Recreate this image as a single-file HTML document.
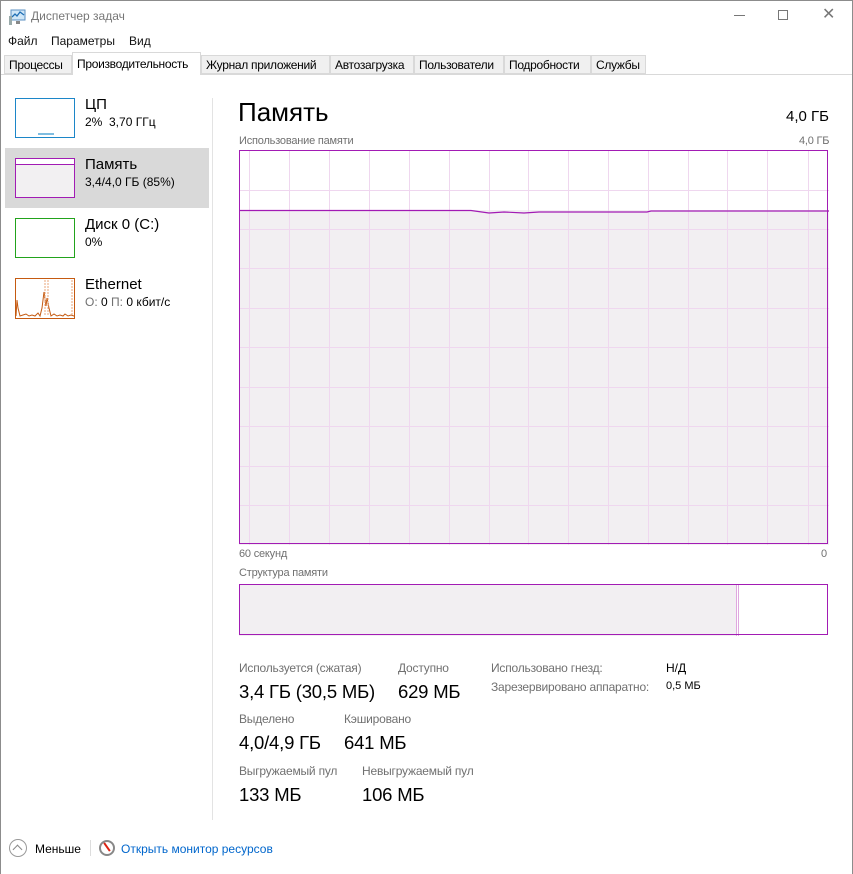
<!DOCTYPE html>
<html><head><meta charset="utf-8"><style>
*{margin:0;padding:0;box-sizing:border-box}
body{width:853px;height:874px;overflow:hidden;background:#fff;font-family:"Liberation Sans","DejaVu Sans",sans-serif;position:relative;color:#000}
.a{position:absolute;white-space:nowrap}
.lbl{font-size:12px;color:#707070;letter-spacing:-0.2px}
.big{font-size:18.5px;color:#000;letter-spacing:-0.2px}
.tab{position:absolute;top:55px;height:19px;border:1px solid #d9d9d9;background:#f0f0f0;font-size:12px;padding:2px 3px 0 4px;color:#000;letter-spacing:-0.3px;overflow:hidden}
</style></head><body>
<div class="a" style="left:0;top:0;width:853px;height:874px;border:1px solid #8c8c8c;border-bottom:none"></div>
<svg class="a" style="left:8px;top:8px" width="18" height="18" viewBox="0 0 18 18"><rect x="3" y="2" width="14" height="10" fill="#cfe6f7" stroke="#5a8fc0"/><polyline points="4,9 7,6 9,8 12,4 16,7" fill="none" stroke="#1f6fb5" stroke-width="1.3"/><rect x="1" y="8" width="3" height="9" fill="#9aa" /><rect x="8" y="13" width="4" height="3" fill="#888"/></svg>
<div class="a" style="left:31px;top:9px;font-size:12px;color:#777">Диспетчер задач</div>
<div class="a" style="left:734px;top:15px;width:11px;height:1px;background:#777"></div>
<div class="a" style="left:778px;top:10px;width:10px;height:10px;border:1px solid #777"></div>
<div class="a" style="left:822px;top:4px;font-size:16px;color:#777">✕</div>
<div class="a" style="left:8px;top:34px;font-size:12px;color:#111">Файл</div>
<div class="a" style="left:51px;top:34px;font-size:12px;color:#111">Параметры</div>
<div class="a" style="left:129px;top:34px;font-size:12px;color:#111">Вид</div>
<div class="a" style="left:1px;top:74px;width:851px;height:1px;background:#d9d9d9"></div>
<div class="tab" style="left:4px;width:68px">Процессы</div>
<div class="tab" style="left:72px;top:52px;height:23px;width:129px;background:#fff;border-bottom:none;padding-top:4px">Производительность</div>
<div class="tab" style="left:201px;width:129px">Журнал приложений</div>
<div class="tab" style="left:330px;width:84px">Автозагрузка</div>
<div class="tab" style="left:414px;width:90px">Пользователи</div>
<div class="tab" style="left:504px;width:87px">Подробности</div>
<div class="tab" style="left:591px;width:55px">Службы</div>
<div class="a" style="left:212px;top:98px;width:1px;height:722px;background:#e3e3e3"></div>
<div class="a" style="left:15px;top:98px;width:60px;height:40px;border:1px solid #1c86c8"></div>
<div class="a" style="left:38px;top:133px;width:16px;height:2px;background:#7fbde0"></div>
<div class="a" style="left:85px;top:96px;font-size:15px">ЦП</div>
<div class="a" style="left:85px;top:115px;font-size:12px">2%&nbsp; 3,70 ГГц</div>
<div class="a" style="left:5px;top:148px;width:204px;height:60px;background:#d9d9d9"></div>
<div class="a" style="left:15px;top:158px;width:60px;height:40px;border:1px solid #a21bb4;background:#f2f0f2"></div>
<div class="a" style="left:16px;top:159px;width:58px;height:6px;background:#fff;border-bottom:1px solid #a21bb4"></div>
<div class="a" style="left:85px;top:156px;font-size:15px">Память</div>
<div class="a" style="left:85px;top:175px;font-size:12px">3,4/4,0 ГБ (85%)</div>
<div class="a" style="left:15px;top:218px;width:60px;height:40px;border:1px solid #22a31c"></div>
<div class="a" style="left:85px;top:216px;font-size:15px">Диск 0 (C:)</div>
<div class="a" style="left:85px;top:235px;font-size:12px">0%</div>
<svg class="a" style="left:15px;top:278px" width="60" height="41" viewBox="0 0 60 41"><rect x="0.5" y="0.5" width="59" height="40" fill="#fff" stroke="#c55a11"/><polyline points="1,38 2,22 3,30 5,38 8,37 11,36 14,38 17,37 20,38 23,35 25,38 27,30 29,14 31,28 32,20 34,30 36,38 39,36 42,38 45,37 48,38 50,36 53,38 56,37 59,38" fill="none" stroke="#c55a11"/><line x1="30" y1="2" x2="30" y2="38" stroke="#e8a57a" stroke-dasharray="2,1"/><line x1="33" y1="2" x2="33" y2="38" stroke="#e8a57a" stroke-dasharray="2,1"/><line x1="57" y1="2" x2="57" y2="38" stroke="#e8a57a" stroke-dasharray="2,1"/></svg>
<div class="a" style="left:85px;top:276px;font-size:15px">Ethernet</div>
<div class="a" style="left:85px;top:295px;font-size:12px"><span style="color:#707070">О:</span> 0 <span style="color:#707070">П:</span> 0 кбит/с</div>
<div class="a" style="left:238px;top:97px;font-size:26px">Память</div>
<div class="a" style="left:786px;top:108px;font-size:15px">4,0 ГБ</div>
<div class="a lbl" style="left:239px;top:135px;font-size:11px">Использование памяти</div>
<div class="a lbl" style="left:799px;top:135px;font-size:11px">4,0 ГБ</div>
<svg class="a" style="left:239px;top:150px" width="590" height="395" viewBox="0 0 590 395">
<rect x="0" y="60" width="590" height="335" fill="#f2eff2"/>
<g stroke="#efd7ef" stroke-width="1">
<line x1="10.5" y1="0" x2="10.5" y2="395"/><line x1="50.5" y1="0" x2="50.5" y2="395"/><line x1="90.5" y1="0" x2="90.5" y2="395"/><line x1="130.5" y1="0" x2="130.5" y2="395"/><line x1="170.5" y1="0" x2="170.5" y2="395"/><line x1="210.5" y1="0" x2="210.5" y2="395"/><line x1="250.5" y1="0" x2="250.5" y2="395"/><line x1="289.5" y1="0" x2="289.5" y2="395"/><line x1="329.5" y1="0" x2="329.5" y2="395"/><line x1="369.5" y1="0" x2="369.5" y2="395"/><line x1="409.5" y1="0" x2="409.5" y2="395"/><line x1="449.5" y1="0" x2="449.5" y2="395"/><line x1="488.5" y1="0" x2="488.5" y2="395"/><line x1="528.5" y1="0" x2="528.5" y2="395"/><line x1="569.5" y1="0" x2="569.5" y2="395"/>
<line x1="0" y1="40.5" x2="590" y2="40.5"/><line x1="0" y1="79.5" x2="590" y2="79.5"/><line x1="0" y1="118.5" x2="590" y2="118.5"/><line x1="0" y1="158.5" x2="590" y2="158.5"/><line x1="0" y1="197.5" x2="590" y2="197.5"/><line x1="0" y1="237.5" x2="590" y2="237.5"/><line x1="0" y1="276.5" x2="590" y2="276.5"/><line x1="0" y1="316.5" x2="590" y2="316.5"/><line x1="0" y1="355.5" x2="590" y2="355.5"/>
</g>
<polyline points="0,60.5 232,60.5 250,63 265,62 285,63 300,62 408,62 412,61 590,61" fill="none" stroke="#a21bb4" stroke-width="1.2"/>
<rect x="0.5" y="0.5" width="588" height="393" fill="none" stroke="#a21bb4"/>
</svg>
<div class="a lbl" style="left:239px;top:548px;font-size:11px">60 секунд</div>
<div class="a lbl" style="left:821px;top:548px;font-size:11px">0</div>
<div class="a lbl" style="left:239px;top:567px;font-size:11px">Структура памяти</div>
<svg class="a" style="left:239px;top:584px" width="590" height="52" viewBox="0 0 590 52">
<rect x="0" y="0" width="497" height="52" fill="#f2eff2"/>
<line x1="497.5" y1="0" x2="497.5" y2="52" stroke="#dfa8df"/><line x1="499.5" y1="0" x2="499.5" y2="52" stroke="#dfa8df"/>
<rect x="0.5" y="0.5" width="588" height="50" fill="none" stroke="#a21bb4"/>
</svg>
<div class="a lbl" style="left:239px;top:661px">Используется (сжатая)</div>
<div class="a big" style="left:239px;top:681px">3,4 ГБ (30,5 МБ)</div>
<div class="a lbl" style="left:398px;top:661px">Доступно</div>
<div class="a big" style="left:398px;top:681px">629 МБ</div>
<div class="a lbl" style="left:491px;top:661px">Использовано гнезд:</div>
<div class="a" style="left:666px;top:661px;font-size:12px">Н/Д</div>
<div class="a lbl" style="left:491px;top:680px">Зарезервировано аппаратно:</div>
<div class="a" style="left:666px;top:680px;font-size:11px">0,5 МБ</div>
<div class="a lbl" style="left:239px;top:712px">Выделено</div>
<div class="a big" style="left:239px;top:732px">4,0/4,9 ГБ</div>
<div class="a lbl" style="left:344px;top:712px">Кэшировано</div>
<div class="a big" style="left:344px;top:732px">641 МБ</div>
<div class="a lbl" style="left:239px;top:764px">Выгружаемый пул</div>
<div class="a big" style="left:239px;top:784px">133 МБ</div>
<div class="a lbl" style="left:362px;top:764px">Невыгружаемый пул</div>
<div class="a big" style="left:362px;top:784px">106 МБ</div>
<div class="a" style="left:9px;top:839px;width:18px;height:18px;border:1px solid #999;border-radius:50%"></div>
<div class="a" style="left:14px;top:846px;width:7px;height:7px;border-left:1.5px solid #888;border-top:1.5px solid #888;transform:rotate(45deg)"></div>
<div class="a" style="left:35px;top:842px;font-size:12px">Меньше</div>
<div class="a" style="left:90px;top:840px;width:1px;height:16px;background:#ddd"></div>
<div class="a" style="left:99px;top:840px;width:16px;height:16px;border:2px solid #888;border-radius:50%;background:#fff"></div>
<div class="a" style="left:106px;top:842px;width:2px;height:10px;background:#d21;transform:rotate(-35deg)"></div>
<div class="a" style="left:121px;top:842px;font-size:12px;color:#0066cc">Открыть монитор ресурсов</div>
</body></html>
